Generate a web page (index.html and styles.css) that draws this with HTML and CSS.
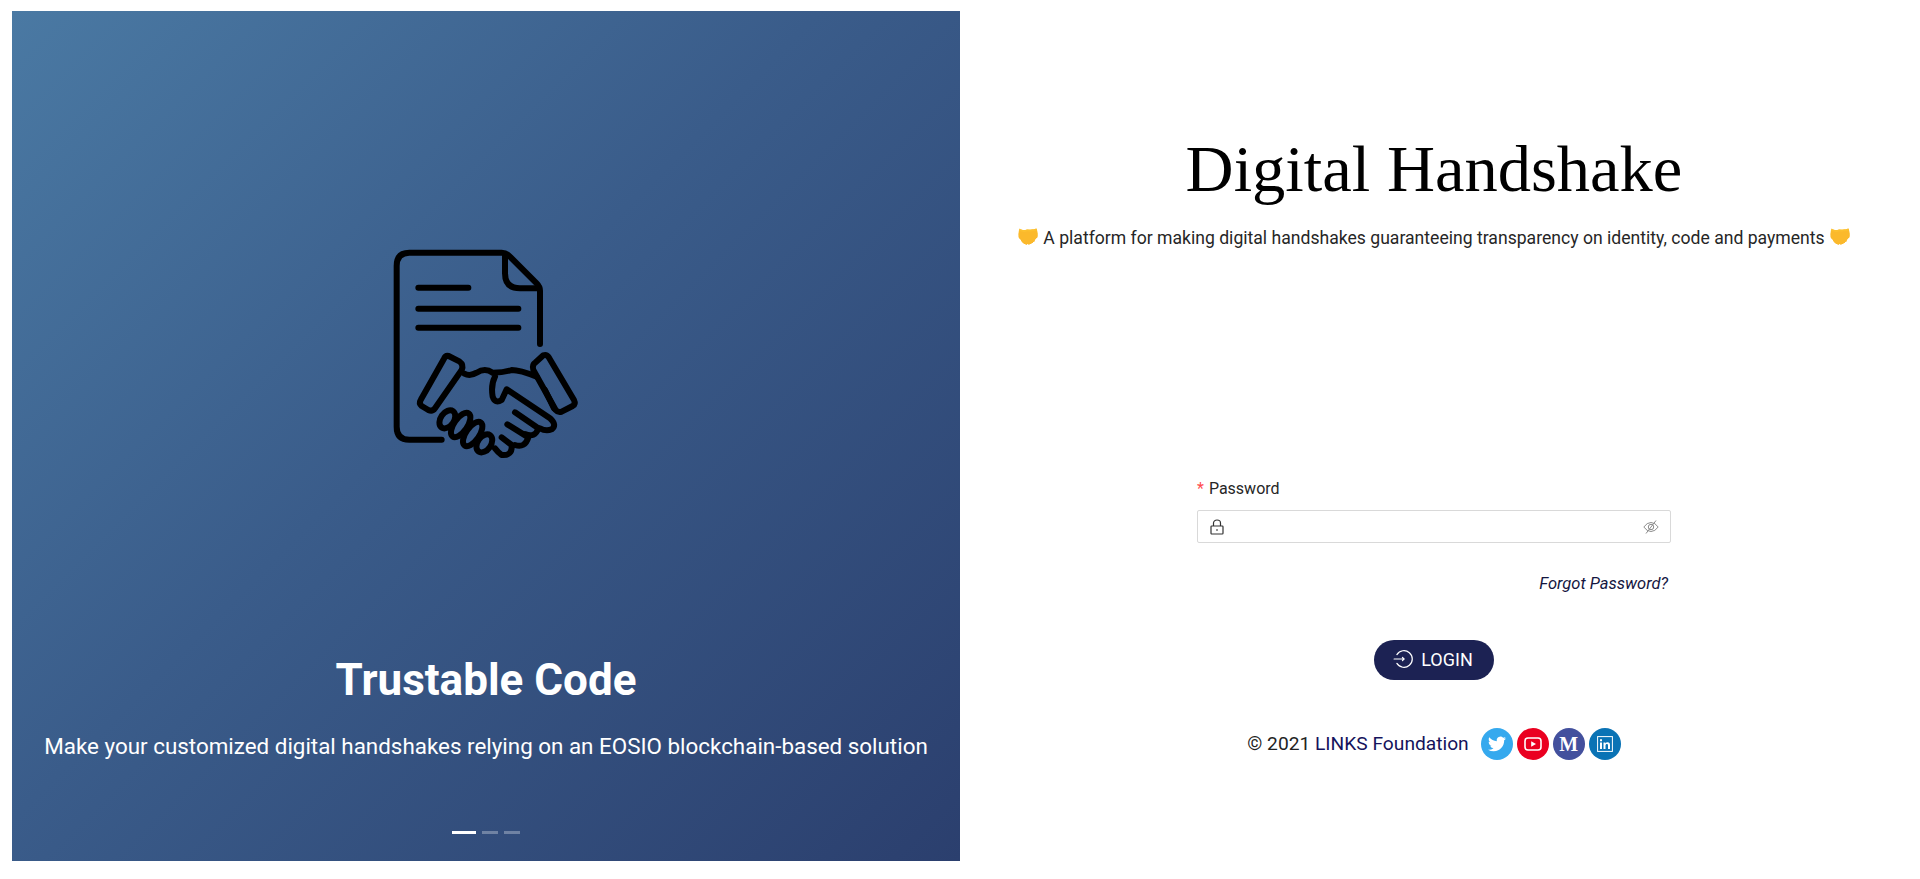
FILE: index.html
```html
<!DOCTYPE html>
<html lang="en">
<head>
<meta charset="utf-8">
<title>Digital Handshake</title>
<link rel="stylesheet" href="styles.css">
</head>
<body>
<main class="page">
  <section class="hero">
    <svg class="hero-icon" viewBox="0 0 660 720" fill="none" stroke="#000" stroke-width="18" stroke-linecap="round" stroke-linejoin="round">
      <path d="M215 629H118Q80 629 80 590V108Q80 68 118 68H395Q408 68 418 78L500 160Q510 170 510 182V342"/>
      <path d="M405 76V130Q405 175 450 175H506"/>
      <path d="M145 173H295M145 236H445M145 293H445"/>
      <path d="M236 378L268 394Q282 404 275 420L195 535Q187 546 175 540L155 528Q146 520 152 510L222 386Q226 376 236 378Z"/>
      <path d="M520 376Q530 372 537 383L612 510Q618 522 608 528L575 545Q565 549 557 540L490 420Q485 405 497 397Z"/>
      <path d="M283 431Q300 440 320 428Q345 412 368 428Q400 428 425 420Q450 420 500 440"/>
      <path d="M375 440Q362 465 368 500Q375 522 395 510L410 478L540 565Q562 585 545 598Q528 605 510 595"/>
      <path d="M435 547L505 595Q495 625 465 612M412 583L475 622Q465 655 435 645M395 622L425 645Q428 678 395 675Q385 668 375 655M525 480L552 535"/>
      <ellipse cx="232" cy="568" rx="20" ry="30" transform="rotate(35 232 568)"/>
      <ellipse cx="272" cy="585" rx="20" ry="42" transform="rotate(35 272 585)"/>
      <ellipse cx="308" cy="612" rx="20" ry="42" transform="rotate(35 308 612)"/>
      <ellipse cx="343" cy="640" rx="20" ry="30" transform="rotate(35 343 640)"/>
    </svg>
    <h2 class="hero-title">Trustable Code</h2>
    <p class="hero-text">Make your customized digital handshakes relying on an EOSIO blockchain-based solution</p>
    <div class="dots">
      <span class="dot dot-active"></span>
      <span class="dot"></span>
      <span class="dot"></span>
    </div>
  </section>
  <section class="panel">
    <h1 class="title">Digital Handshake</h1>
    <p class="tagline"><span class="emoji">🤝</span> A platform for making digital handshakes guaranteeing transparency on identity, code and payments <span class="emoji">🤝</span></p>
    <form class="form">
      <label class="label"><span class="req">*</span>Password</label>
      <div class="input">
        <svg class="lock" viewBox="0 0 14 16" fill="none" stroke="#333" stroke-width="1.200">
          <rect x="1" y="7" width="12" height="8" rx=".8"/>
          <path d="M3.500 7V4a3.500 3 0 0 1 7 0V7"/>
          <path d="M6.300 11h1.400" stroke-width="1.600"/>
        </svg>
        <svg class="eye" viewBox="0 0 16 16" fill="none" stroke="#8c8c8c" stroke-width="1">
          <path d="M.8 8Q4 3.500 8 3.500T15.200 8Q12 12.500 8 12.500T.8 8Z"/>
          <circle cx="8" cy="8" r="2.700"/>
          <path d="M13 1.500L3 14.500"/>
        </svg>
      </div>
      <a class="forgot">Forgot Password?</a>
      <button class="login" type="button">
        <svg class="login-icon" viewBox="0 0 18 18" fill="none" stroke="#fff" stroke-width="1.100" stroke-linecap="round">
          <path d="M3.500 5A7.500 7.500 0 1 1 3.500 13"/>
          <path d="M1 9H10M8.500 7.500L10 9L8.500 10.500"/>
        </svg>
        LOGIN
      </button>
    </form>
    <footer class="footer">
      <span class="copy">© 2021 <a class="links">LINKS Foundation</a></span>
      <div class="socials">
        <a class="social tw"><svg viewBox="0 0 24 24" width="18" height="18" fill="#fff"><path d="M23.953 4.57a10 10 0 01-2.825.775 4.958 4.958 0 002.163-2.723c-.951.555-2.005.959-3.127 1.184a4.92 4.920 0 00-8.384 4.482C7.690 8.095 4.067 6.130 1.640 3.162a4.822 4.822 0 00-.666 2.475c0 1.710.870 3.213 2.188 4.096a4.904 4.904 0 01-2.228-.616v.060a4.923 4.923 0 003.946 4.827 4.996 4.996 0 01-2.212.085 4.936 4.936 0 004.604 3.417 9.867 9.867 0 01-6.102 2.105c-.390 0-.779-.023-1.170-.067a13.995 13.995 0 007.557 2.209c9.053 0 13.998-7.496 13.998-13.985 0-.210 0-.420-.015-.630A9.935 9.935 0 0024 4.590z"/></svg></a>
        <a class="social yt"><svg viewBox="0 0 18 14" width="18" height="14"><rect x="1" y="1" width="16" height="12" rx="3" fill="none" stroke="#fff" stroke-width="1.600"/><path d="M7.200 4.300L12 7L7.200 9.700Z" fill="#fff"/></svg></a>
        <a class="social md">M</a>
        <a class="social li"><svg viewBox="0 0 16 16" width="16" height="16"><rect x=".6" y=".6" width="14.800" height="14.800" fill="none" stroke="#fff" stroke-width="1"/><path d="M3 6.500h2V13H3zM3 3.300h2v2H3zM6.500 6.500h1.900v1c.5-.8 1.200-1.200 2.200-1.200 1.700 0 2.400 1 2.400 2.800V13h-2V9.500c0-1-.3-1.500-1.100-1.500s-1.400.6-1.400 1.600V13h-2z" fill="#fff"/></svg></a>
      </div>
    </footer>
  </section>
</main>
</body>
</html>
```
FILE: styles.css
```css
* { box-sizing: border-box; }
html, body { margin: 0; height: 100%; background: #fff; }
body { font-family: Roboto, sans-serif; overflow: hidden; }
.page { display: grid; grid-template-columns: 948px 948px; height: 879px; padding: 11px 12px 18px; }
.hero {
  display: flex; flex-direction: column; align-items: center;
  background: linear-gradient(135deg, #4a79a3 0%, #3a5c8a 45%, #2b3f6e 100%);
  color: #fff;
}
.hero-icon { width: 220px; height: 240px; margin: 219px 12px 0 0; flex: none; }
.hero-title { margin: 182px 0 0; font-size: 44px; line-height: 56px; font-weight: 700; }
.hero-text { margin: 22px 0 0; font-size: 22.4px; line-height: 32px; }
.dots { display: flex; gap: 6px; margin-top: 69px; }
.dot { width: 16px; height: 3px; background: rgba(255,255,255,.3); }
.dot-active { width: 24px; background: #fff; }
.panel { display: flex; flex-direction: column; align-items: center; }
.title { margin: 116px 0 0; font-family: "Liberation Serif", serif; font-weight: 400; font-size: 66.5px; line-height: 84px; color: #000; }
.tagline { margin: 13px 0 0; font-size: 17.6px; line-height: 28px; color: #262626; }
.emoji { color: transparent; text-shadow: 0 0 0 #fbb92c, 0 -1.5px 0 #fbb92c, 0 -3px 0 #fcc02f; }
.form { width: 474px; margin-top: 225px; display: flex; flex-direction: column; }
.label { font-size: 16px; line-height: 24px; color: #262626; }
.req { color: #ff4d4f; margin-right: 5px; }
.input { height: 33px; margin-top: 9px; border: 1px solid #d9d9d9; border-radius: 2px; display: flex; align-items: center; justify-content: space-between; padding: 0 11px 0 12px; }
.lock { width: 14px; height: 16px; }
.eye { width: 16px; height: 16px; }
.forgot { align-self: flex-end; margin: 29px 3px 0 0; font-size: 16.5px; line-height: 24px; font-style: italic; color: #14163f; }
.login { align-self: center; width: 120px; height: 40px; margin-top: 44px; padding: 0 0 2px; border: 0; border-radius: 20px; background: #1c2253; color: #fff; font: 18px Roboto, sans-serif; display: flex; align-items: center; justify-content: center; gap: 8px; }
.login-icon { width: 20px; height: 20px; margin-left: -2px; }
.footer { display: flex; align-items: center; gap: 12px; margin-top: 48px; }
.copy { font-size: 19.2px; color: #222; padding-bottom: 2px; }
.links { color: #15135c; }
.socials { display: flex; gap: 4px; }
.social { width: 32px; height: 32px; border-radius: 50%; display: flex; align-items: center; justify-content: center; color: #fff; }
.tw { background: #35a9ee; }
.yt { background: #ea0020; }
.md { background: #43509d; font: 700 20px "Liberation Serif", serif; }
.li { background: #0a73b5; }
```
